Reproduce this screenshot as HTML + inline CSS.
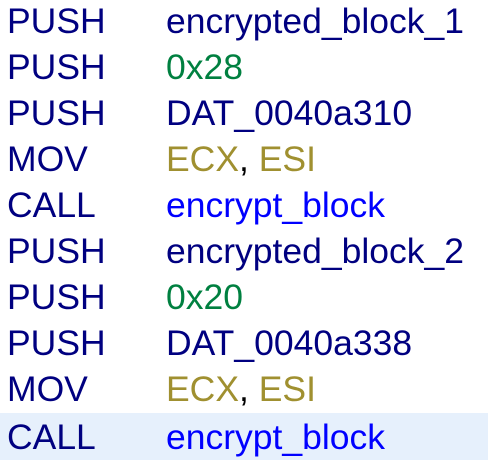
<!DOCTYPE html>
<html><head><style>
html,body{margin:0;padding:0;background:#fff;width:488px;height:464px;overflow:hidden}
.l{position:absolute;left:0;width:488px;height:46px;line-height:46px;font-family:"Liberation Sans",Arial,sans-serif;font-size:35.5px;white-space:nowrap}
.m{position:absolute;left:7px;color:#000080}
.o{position:absolute;left:166px}
.n{color:#000080}.g{color:#008040}.y{color:#a09030}.b{color:#0000ff}.k{color:#000}
.hl{background:#e6f0fc}
</style></head><body>
<div class="l" style="top:-2px"><span class="m">PUSH</span><span class="o n">encrypted_block_1</span></div>
<div class="l" style="top:44px"><span class="m">PUSH</span><span class="o g">0x28</span></div>
<div class="l" style="top:90px"><span class="m">PUSH</span><span class="o n">DAT_0040a310</span></div>
<div class="l" style="top:136px"><span class="m">MOV</span><span class="o"><span class="y">ECX</span><span class="k">, </span><span class="y">ESI</span></span></div>
<div class="l" style="top:182px"><span class="m">CALL</span><span class="o b">encrypt_block</span></div>
<div class="l" style="top:228px"><span class="m">PUSH</span><span class="o n">encrypted_block_2</span></div>
<div class="l" style="top:274px"><span class="m">PUSH</span><span class="o g">0x20</span></div>
<div class="l" style="top:320px"><span class="m">PUSH</span><span class="o n">DAT_0040a338</span></div>
<div class="l" style="top:366px"><span class="m">MOV</span><span class="o"><span class="y">ECX</span><span class="k">, </span><span class="y">ESI</span></span></div>
<div class="l hl" style="top:413px;height:47px;line-height:48px"><span class="m">CALL</span><span class="o b">encrypt_block</span></div>
</body></html>
